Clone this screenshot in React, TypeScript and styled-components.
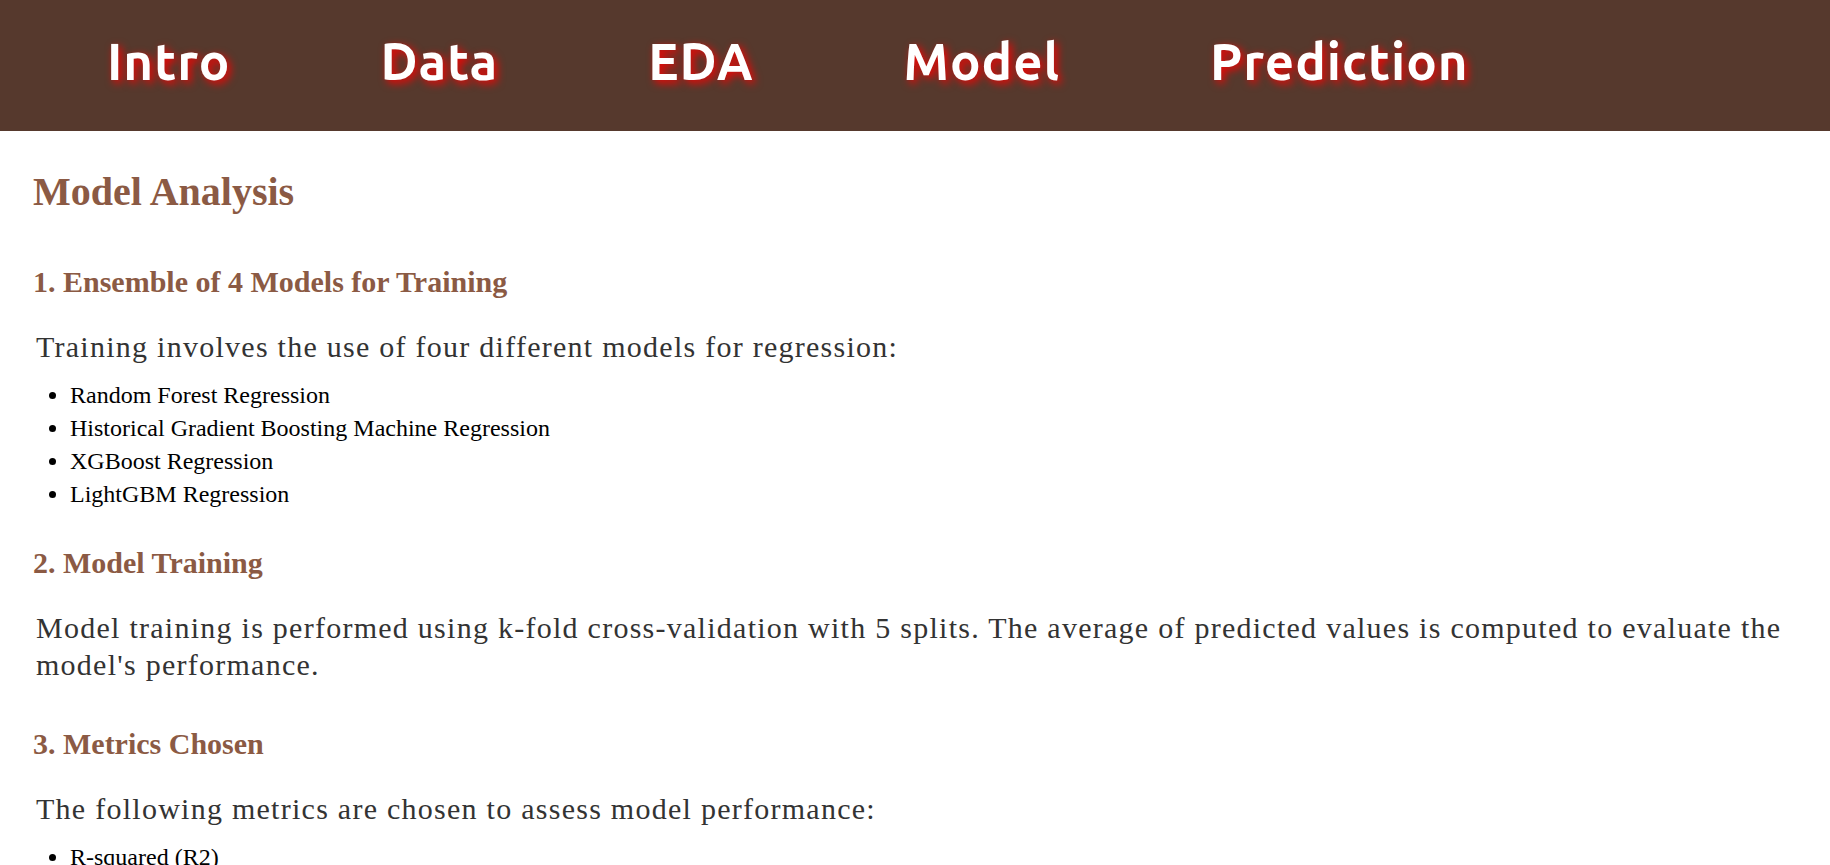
import React from "react";
import styled, { createGlobalStyle } from "styled-components";

const GlobalStyle = createGlobalStyle`
  html { scrollbar-width: none; }
  body { margin: 0; background: #fff; font-family: "Liberation Serif", "Times New Roman", serif; }
`;
const Header = styled.header`
  background: #56392d;
  padding: 0 32px;
`;
const Nav = styled.nav`
  display: flex;
`;
const NavLink = styled.a`
  padding: 20px 75px 28px;
  font: 700 51px/83px "Ubuntu", "Noto Sans", sans-serif;
  letter-spacing: 1px;
  color: #fff;
  text-decoration: none;
  text-shadow: 3px 3px 8px #f00;
`;
const Main = styled.main`
  padding: 38px 33px;
`;
const Title = styled.h1`
  margin: 0 0 50px;
  font-size: 40px;
  line-height: 46px;
  color: #8b5a44;
`;
const Section = styled.section`
  margin-bottom: 35px;
`;
const Heading = styled.h2`
  margin: 0;
  font-size: 30px;
  line-height: 34px;
  color: #8b5a44;
`;
const Text = styled.p`
  margin: 29px 3px 14px;
  font-size: 30px;
  line-height: 37px;
  letter-spacing: 0.042em;
  color: #333;

  &:last-child {
    padding-bottom: 9px;
  }
`;
const List = styled.ul`
  margin: 0;
  padding-left: 37px;
  font-size: 24px;
  line-height: 33px;
  color: #000;
`;

const pages = ["Intro", "Data", "EDA", "Model", "Prediction"];
const sections = [
  { title: "1. Ensemble of 4 Models for Training", text: "Training involves the use of four different models for regression:", items: ["Random Forest Regression", "Historical Gradient Boosting Machine Regression", "XGBoost Regression", "LightGBM Regression"] },
  { title: "2. Model Training", text: "Model training is performed using k-fold cross-validation with 5 splits. The average of predicted values is computed to evaluate the model's performance.", items: [] },
  { title: "3. Metrics Chosen", text: "The following metrics are chosen to assess model performance:", items: ["R-squared (R2)"] },
];

export default function App() {
  return (
    <>
      <GlobalStyle />
      <Header><Nav>{pages.map((p) => <NavLink key={p} href={"#" + p.toLowerCase()}>{p}</NavLink>)}</Nav></Header>
      <Main>
        <Title>Model Analysis</Title>
        {sections.map((s) => (
          <Section key={s.title}>
            <Heading>{s.title}</Heading>
            <Text>{s.text}</Text>
            {s.items.length > 0 && <List>{s.items.map((i) => <li key={i}>{i}</li>)}</List>}
          </Section>
        ))}
      </Main>
    </>
  );
}
